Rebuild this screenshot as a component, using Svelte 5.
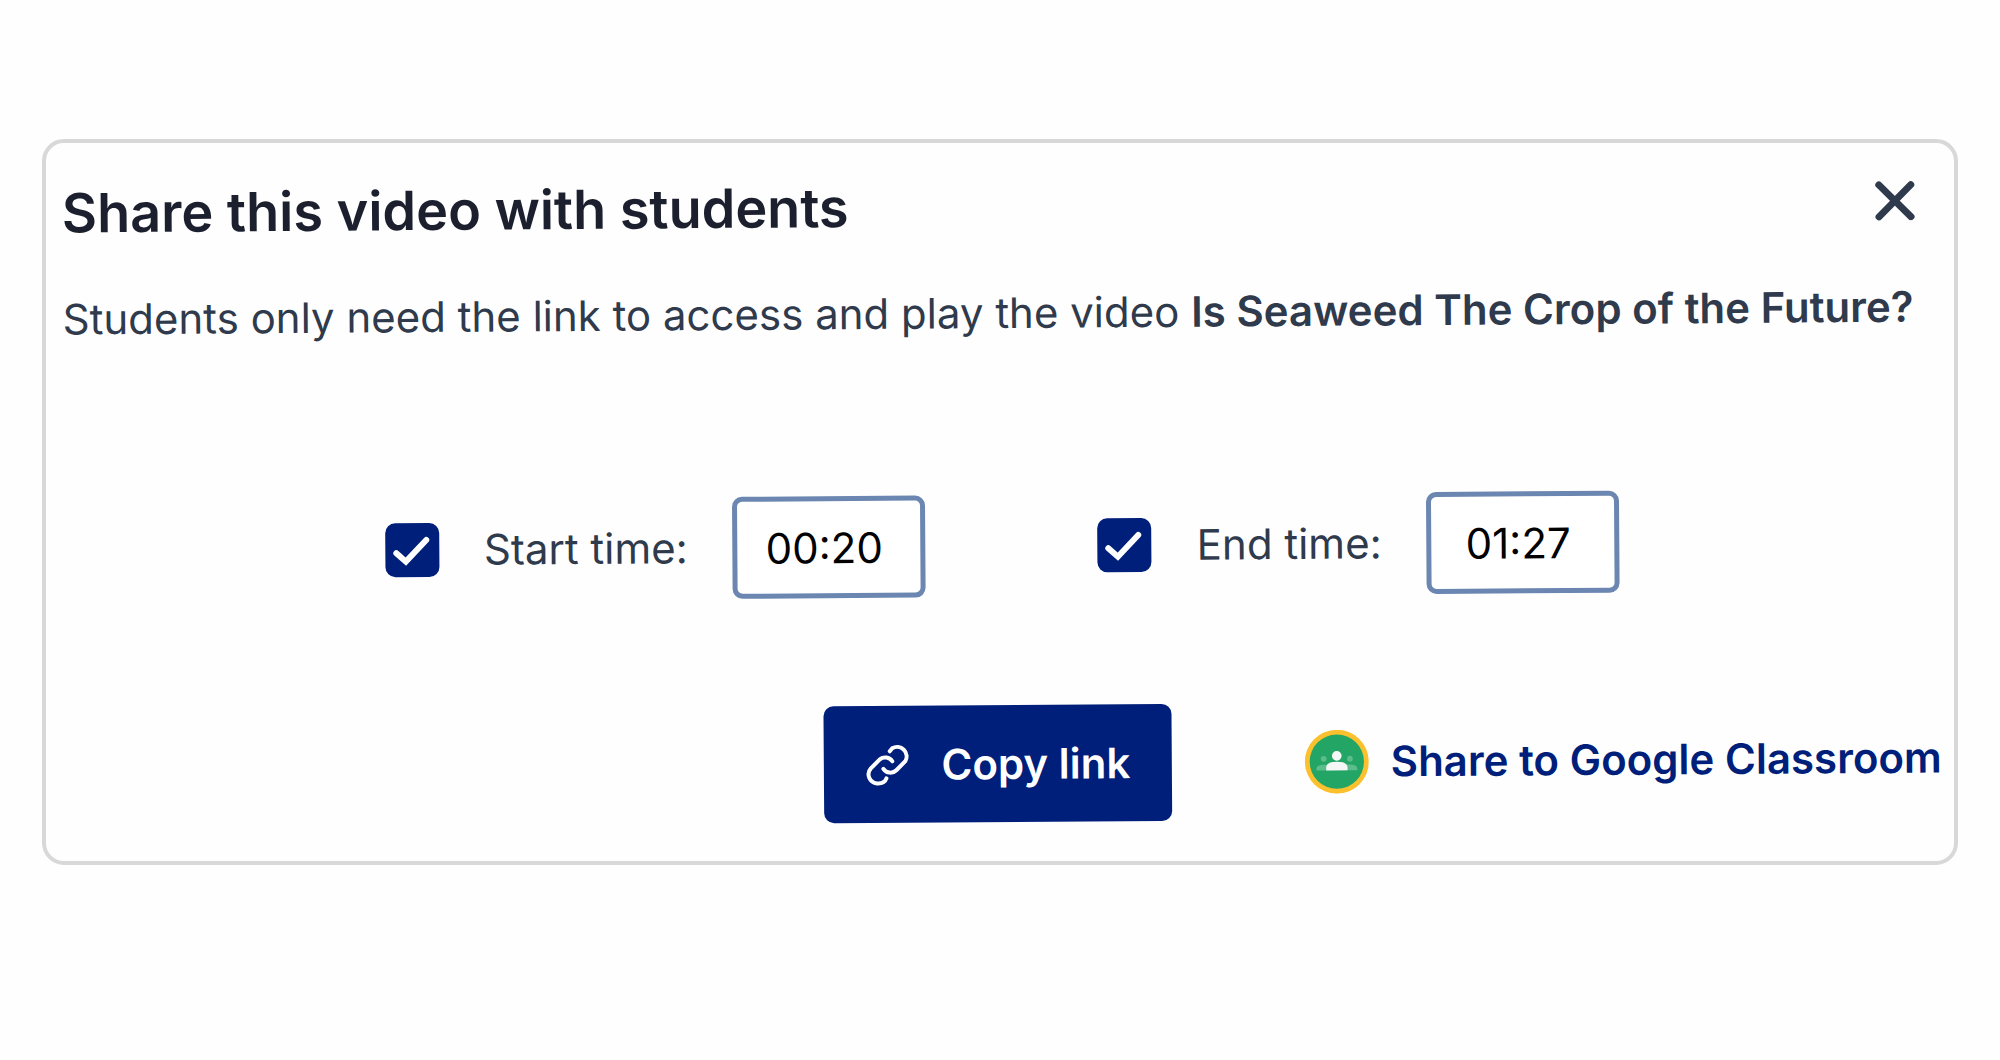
<script>
  let title = "Is Seaweed The Crop of the Future?"
  let start = "00:20"
  let end = "01:27"
  let useStart = true
  let useEnd = true
</script>

<section class="card" aria-labelledby="share-title">
  <div class="content">
    <header>
      <h2 id="share-title">Share this video with students</h2>
      <button class="close" type="button" aria-label="Close">
        <svg viewBox="0 0 40 40" aria-hidden="true">
          <path d="M4 4L36 36M36 4L4 36" />
        </svg>
      </button>
    </header>

    <p>
      Students only need the link to access and play the video
      <strong>{title}</strong>
    </p>

    <div class="times">
      <div class="time">
        <span class="check">
          <input id="use-start" type="checkbox" bind:checked={useStart} />
          <svg viewBox="0 0 54 54" aria-hidden="true"><path d="M11 30L20.500 38.500L41 17" /></svg>
        </span>
        <label for="use-start">Start time:</label>
        <input class="clock" type="text" aria-label="Start time" bind:value={start} />
      </div>
      <div class="time">
        <span class="check">
          <input id="use-end" type="checkbox" bind:checked={useEnd} />
          <svg viewBox="0 0 54 54" aria-hidden="true"><path d="M11 30L20.500 38.500L41 17" /></svg>
        </span>
        <label for="use-end">End time:</label>
        <input class="clock" type="text" aria-label="End time" bind:value={end} />
      </div>
    </div>

    <div class="actions">
      <button class="copy" type="button">
        <svg viewBox="0 0 44 44" aria-hidden="true">
          <path d="M24 8.500L26.500 5.500A9.500 9.500 0 0 1 39.500 18.500L30.500 27.500A8.500 8.500 0 0 1 17.500 26" />
          <path d="M26.500 18.500A8.500 8.500 0 0 0 14 16.500L5 25.500A9 9 0 0 0 11 40.500Q18.500 41 20.500 35.500" />
        </svg>
        Copy link
      </button>
      <a class="classroom" href="#classroom">
        <svg viewBox="0 0 66 66" aria-hidden="true">
          <circle cx="33" cy="33" r="33" fill="#fbc02d" />
          <circle cx="33" cy="33" r="28" fill="#23a566" />
          <g fill="#5cbc8c">
            <circle cx="19.500" cy="30" r="3" />
            <circle cx="46.500" cy="30" r="3" />
            <path d="M12 42v-2q0-4 8-4h26q8 0 8 4v2z" />
          </g>
          <g fill="#f5f7f6">
            <circle cx="33" cy="27" r="5" />
            <path d="M22 42v-3q0-6 11-6t11 6v3z" />
          </g>
        </svg>
        <span>Share to Google Classroom</span>
      </a>
    </div>
  </div>
</section>

<style>
  :global(body) {
    background: #fefefe;
  }

  .card {
    margin: 139px 42px 0;
    padding: 0 14px 0 18px;
    border: 4px solid #d8d8d8;
    border-radius: 22px;
    color: #2f3a4c;
    font-family: Inter, Roboto, sans-serif;
    font-size: 42px;
    line-height: 52px;
  }

  /* the panel sits at a slight tilt inside its frame */
  .content {
    padding: 32px 0 39px;
    transform: rotate(-0.4deg);
  }

  header {
    display: flex;
    align-items: center;
    justify-content: space-between;
    padding-right: 21px;
  }

  h2 {
    margin: 0;
    color: #1c202e;
    font-size: 54px;
    font-weight: 600;
    line-height: 64px;
  }

  button,
  input {
    font: inherit;
  }

  .close {
    width: 44px;
    height: 44px;
    padding: 2px;
    border: 0;
    background: none;
  }

  .close svg {
    display: block;
    stroke: #2f3a4c;
    stroke-width: 7;
    stroke-linecap: round;
  }

  p {
    margin: 48px 0 0;
    white-space: nowrap;
  }

  strong {
    font-weight: 600;
  }

  .times {
    display: flex;
    justify-content: center;
    gap: 172px;
    margin-top: 156px;
  }

  .time {
    display: flex;
    align-items: center;
    gap: 45px;
  }

  .check {
    display: grid;
    width: 54px;
    height: 54px;
  }

  .check input,
  .check svg {
    grid-area: 1 / 1;
    width: 54px;
    height: 54px;
    margin: 0;
  }

  .check input {
    appearance: none;
    border: 4px solid #001f7a;
    border-radius: 10px;
  }

  .check input:checked {
    background: #001f7a;
  }

  .check svg {
    fill: none;
    stroke: #fff;
    stroke-width: 6;
    stroke-linecap: round;
    pointer-events: none;
  }

  .clock {
    box-sizing: border-box;
    width: 193px;
    height: 102px;
    padding: 0 10px 0 0;
    border: 5px solid #6b86b0;
    border-radius: 10px;
    background: #fff;
    color: #000;
    text-align: center;
  }

  .actions {
    display: grid;
    grid-template-columns: 1fr auto 1fr;
    align-items: center;
    margin: 108px 0 0 -12px;
  }

  .copy {
    display: flex;
    grid-column: 2;
    align-items: center;
    gap: 32px;
    height: 117px;
    padding: 0 42px;
    border: 0;
    border-radius: 10px;
    background: #001f7a;
    color: #fff;
    font-weight: 600;
  }

  .copy svg {
    width: 44px;
    height: 44px;
    fill: none;
    stroke: #fff;
    stroke-width: 4;
    stroke-linecap: round;
    stroke-linejoin: round;
  }

  .classroom {
    display: flex;
    align-items: center;
    justify-self: end;
    gap: 22px;
    color: #001f7a;
    font-weight: 600;
    text-decoration: none;
    white-space: nowrap;
  }

  .classroom svg {
    width: 64px;
    height: 64px;
  }
</style>
